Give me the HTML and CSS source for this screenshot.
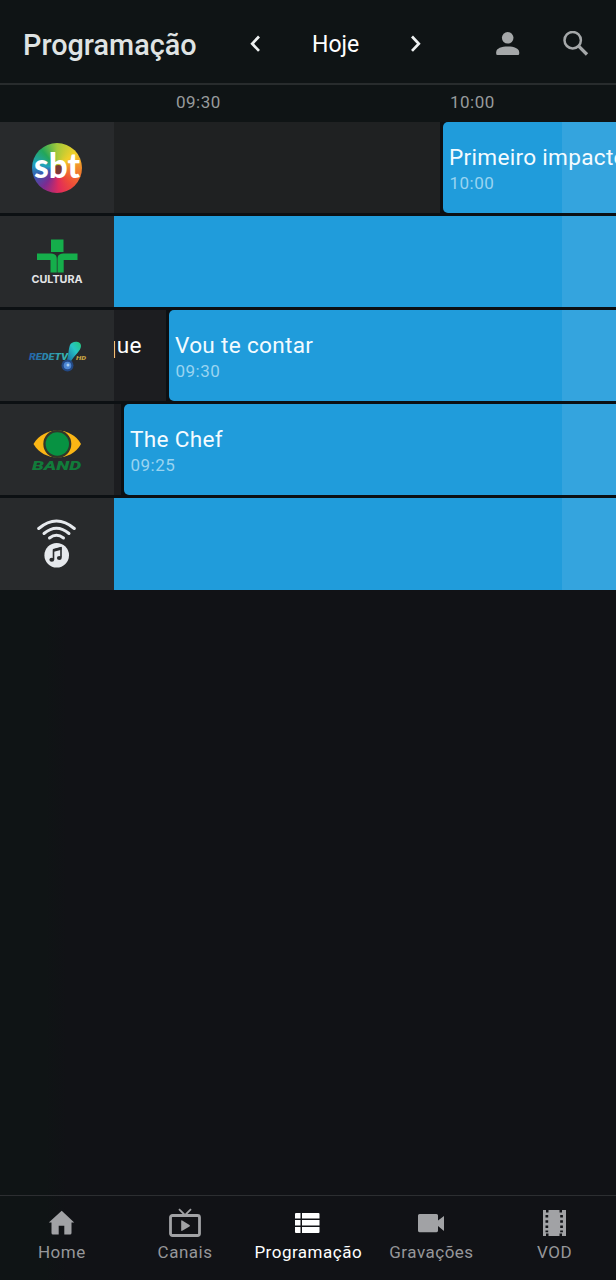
FILE: index.html
```html
<!DOCTYPE html>
<html lang="pt-BR">
<head>
<meta charset="utf-8">
<title>Programação</title>
<link rel="stylesheet" href="styles.css">
</head>
<body>
<div class="app">
  <header class="topbar">
    <h1 class="title">Programação</h1>
    <svg class="prev" width="12" height="18" viewBox="0 0 12 18"><path d="M10 1.500 3.200 8.700l6.800 7.200" fill="none" stroke="#eef1f1" stroke-width="2.700"/></svg>
    <span class="day">Hoje</span>
    <svg class="next" width="12" height="18" viewBox="0 0 12 18"><path d="M3 1.500 9.800 8.700 3 15.900" fill="none" stroke="#eef1f1" stroke-width="2.700"/></svg>
    <svg class="user" width="24" height="24" viewBox="0 0 24 24" fill="#a5a8a9"><circle cx="11.700" cy="5.800" r="5.800"/><path d="M.2 20.300C.2 16.300 5.700 14.600 11.700 14.600s11.500 1.700 11.500 5.700V21.800q0 1.200-1.200 1.200H1.400Q.2 23 .2 21.800Z"/></svg>
    <svg class="search" width="26" height="26" viewBox="0 0 26 26" fill="none" stroke="#a5a8a9"><circle cx="9.700" cy="9.200" r="8.200" stroke-width="2.500"/><path d="m15.700 15.200 8.300 8.300" stroke-width="3.300"/></svg>
  </header>
  <div class="times"><span class="t1">09:30</span><span class="t2">10:00</span></div>
  <main class="guide">
    <section class="row">
      <div class="channel">
        <svg width="54" height="54" viewBox="0 0 54 54">
          <foreignObject x="2" y="2" width="50" height="50"><div class="wheel"></div></foreignObject>
          <circle cx="28.500" cy="28.500" r="4.500" fill="#7b3a35"/>
          <text x="27" y="36.500" text-anchor="middle" class="sbt" textLength="46" lengthAdjust="spacingAndGlyphs">sbt</text>
        </svg>
      </div>
      <div class="track"><div class="prog past first"></div><div class="prog live start"><b>Primeiro impacto</b><small>10:00</small></div></div>
    </section>
    <section class="row">
      <div class="channel">
        <svg width="54" height="54" viewBox="0 0 54 54">
          <g fill="#15ae4b"><path d="M21 4.500h12.500V17H21z"/><path d="M7 18.500h14q5.800 0 5.800 5.500v13.500H20.500V25H7z"/><path d="M47.500 18.500H33.300q-5.800 0-5.800 5.500v13.500h6.200V25h13.800z"/></g>
          <text x="27" y="48.200" text-anchor="middle" class="cultura" textLength="51" lengthAdjust="spacingAndGlyphs">CULTURA</text>
        </svg>
      </div>
      <div class="track"><div class="prog live"></div></div>
    </section>
    <section class="row">
      <div class="channel">
        <svg width="60" height="54" viewBox="0 0 60 54">
          <defs>
            <linearGradient id="rede"><stop offset="0" stop-color="#2360a9"/><stop offset="1" stop-color="#36bdb1"/></linearGradient>
            <linearGradient id="bang" x1="1" y1="0" x2="0" y2="1"><stop offset="0" stop-color="#23c878"/><stop offset=".4" stop-color="#27c4c5"/><stop offset="1" stop-color="#165d9b"/></linearGradient>
          </defs>
          <text x="2" y="31.200" class="rede" fill="url(#rede)" textLength="39" lengthAdjust="spacingAndGlyphs">REDETV</text>
          <path d="M43 16c1-4 11-5 11 1 0 5-7 9-11 17l-4-1c3-6 2-12 4-17Z" fill="url(#bang)"/>
          <circle cx="40.500" cy="36.500" r="6" fill="#234883"/><circle cx="40.500" cy="36.500" r="3.800" fill="#4d87d4"/><circle cx="41" cy="36" r="1.500" fill="#a9cef0"/>
          <text x="49" y="31" class="hd" textLength="10" lengthAdjust="spacingAndGlyphs">HD</text>
        </svg>
      </div>
      <div class="track"><div class="prog past clipped"><b>que</b></div><div class="prog live start"><b>Vou te contar</b><small>09:30</small></div></div>
    </section>
    <section class="row">
      <div class="channel">
        <svg width="54" height="54" viewBox="0 0 54 54">
          <path d="M3.500 21C14 3 41 3 51 21 41 39 14 39 3.500 21Z" fill="#fbb615"/>
          <circle cx="27.300" cy="21" r="14" fill="#303729"/><circle cx="27.300" cy="21" r="11.700" fill="#079242"/>
          <text x="2" y="47" class="band" textLength="49" lengthAdjust="spacingAndGlyphs">BAND</text>
        </svg>
      </div>
      <div class="track"><div class="prog past sliver"></div><div class="prog live start"><b>The Chef</b><small>09:25</small></div></div>
    </section>
    <section class="row last">
      <div class="channel">
        <svg width="54" height="54" viewBox="0 0 54 54">
          <g fill="none" stroke="#e6e9ed" stroke-width="3" stroke-linecap="round"><path d="M8.700 11.500q17.800-15 35.600 0"/><path d="M14 16.500q12.500-10.500 25 0"/><path d="M19.500 21q7-5.500 14 0"/></g>
          <circle cx="26.700" cy="38.300" r="12.300" fill="#e6e9ed"/>
          <path d="M23.500 42.500V33l7.500-2v9.500" fill="none" stroke="#292b2d" stroke-width="1.600"/><path d="m23 32 8.500-2.200v3L23 35z" fill="#292b2d"/>
          <ellipse cx="21.800" cy="42.800" rx="2.400" ry="2" fill="#292b2d"/><ellipse cx="29.300" cy="41" rx="2.400" ry="2" fill="#292b2d"/>
        </svg>
      </div>
      <div class="track"><div class="prog live"></div></div>
    </section>
    <div class="later"></div>
  </main>
  <nav class="tabs">
    <a class="tab"><svg width="30" height="30" viewBox="0 0 30 30" fill="#a1a2a5"><path d="M14.700 2.700 1.800 14.500H4.500V25q0 1.500 1.500 1.500h5.700V17.700h5.600v8.800H23q1.500 0 1.500-1.500V14.500h2.700Z"/></svg><span>Home</span></a>
    <a class="tab"><svg width="34" height="30" viewBox="0 0 34 30"><path d="m11 1.200 6 6 6-6" fill="none" stroke="#a1a2a5" stroke-width="1.800"/><rect x="2.500" y="7.500" width="29" height="20" rx="2" fill="none" stroke="#a1a2a5" stroke-width="2.800"/><path d="M13.200 13q0-1 1-.5l7.300 4.500q1 .7 0 1.400l-7.300 4.400q-1 .5-1-.5Z" fill="#a1a2a5"/></svg><span>Canais</span></a>
    <a class="tab active"><svg width="30" height="30" viewBox="0 0 30 30" fill="#fff"><path d="M3 5h4.500v5.500H2V6q0-1 1-1ZM9 5H25.500q1 0 1 1V10.500H9ZM2 12h5.500v5.500H2ZM9 12H26.500v5.500H9ZM2 19h5.500v6H3q-1 0-1-1ZM9 19H26.500v5q0 1-1 1H9Z"/></svg><span>Programação</span></a>
    <a class="tab"><svg width="30" height="30" viewBox="0 0 30 30" fill="#a1a2a5"><path d="M3.500 6h17q1.500 0 1.500 1.500v5L28 8v15l-6-5v4.800q0 1.400-1.500 1.400h-17Q2 24.200 2 22.800V7.500Q2 6 3.500 6Z"/></svg><span>Gravações</span></a>
    <a class="tab"><svg width="30" height="30" viewBox="0 0 30 30"><path d="M4 2h3v2.500h2.500V2h11v2.500H23V2h4v26h-4v-2.500h-2.500V28h-11v-2.500H7V28H4Z" fill="#a1a2a5"/><path d="M6.500 7h2.700v2.600H6.500zM6.500 12.200h2.700v2.600H6.500zM6.500 17.400h2.700V20H6.500zM6.500 22.500h2.700v1.800H6.500zM21.200 7h2.700v2.600h-2.700zM21.200 12.200h2.700v2.600h-2.700zM21.200 17.400h2.700V20h-2.700zM21.200 22.500h2.700v1.800h-2.700z" fill="#111216"/></svg><span>VOD</span></a>
  </nav>
</div>
</body>
</html>
```
FILE: styles.css
```css
* { box-sizing: border-box; }
body { margin: 0; background: #111216; font-family: Roboto, "Liberation Sans", sans-serif; }
svg { display: block; flex: none; }
.app { width: 616px; height: 1280px; display: flex; flex-direction: column; overflow: hidden; background: linear-gradient(90deg, #0f1415 0, #0f1415 46px, #111216 66px); }
.topbar { height: 85px; flex: none; display: flex; align-items: center; padding: 4px 0 0 23px; border-bottom: 2px solid #282c2d; background: #0f1415; color: #fff; }
.title { margin: 0; padding-top: 3px; width: 226px; font-size: 28.8px; font-weight: 500; line-height: 34px; color: #dfe3e3; white-space: nowrap; }
.day { width: 97px; margin-left: 51px; padding-top: 3px; font-size: 23px; line-height: 30px; white-space: nowrap; }
.user { margin-left: 75px; }
.search { margin-left: 43px; }
.times { height: 37px; flex: none; display: flex; padding: 7px 0 0 176px; background: #0f1415; color: #979b9c; font-size: 17px; line-height: 20px; letter-spacing: .5px; }
.t1 { width: 274px; }
.guide { position: relative; display: flex; flex-direction: column; gap: 3px; background: #0c1013; }
.row { height: 91px; display: flex; }
.last { height: 92px; }
.channel { width: 114px; flex: none; display: flex; align-items: center; justify-content: center; background: #282a2c; }
.track { flex: 1; min-width: 0; display: flex; overflow: hidden; }
.prog { overflow: hidden; white-space: nowrap; }
.past { flex: none; background: #1c1d20; color: #fff; margin-right: 3px; }
.first { width: 326px; background: #1f2122; }
.clipped { width: 52px; padding-top: 22px; display: flex; }
.clipped b { margin-left: -10.5px; }
.sliver { width: 7px; }
.live { flex: 1; min-width: 0; background: #209cdb; color: #f4fbff; }
.start { padding: 22px 0 0 6px; border-radius: 5px 0 0 5px; }
.prog b { display: block; font-weight: 400; font-size: 22.6px; line-height: 28px; letter-spacing: .3px; }
.prog small { display: block; font-size: 17px; line-height: 20px; margin: 1px 0 0 .5px; letter-spacing: .5px; color: #99d4f1; }
.later { position: absolute; top: 0; right: 0; width: 54px; height: 100%; background: rgba(255, 255, 255, .09); clip-path: polygon(0 0, 100% 0, 100% 91px, 0 91px, 0 94px, 100% 94px, 100% 185px, 0 185px, 0 188px, 100% 188px, 100% 279px, 0 279px, 0 282px, 100% 282px, 100% 373px, 0 373px, 0 376px, 100% 376px, 100% 100%, 0 100%); }
.wheel { width: 50px; height: 50px; border-radius: 50%; background: conic-gradient(#a3c93b, #f2cf29 50deg, #f18a2b 90deg, #ee4a3a 140deg, #e02a5c 175deg, #7b2b91 215deg, #3a58b0 250deg, #21a3bd 280deg, #23a659 320deg, #a3c93b); }
.sbt { font: 900 34px Lato, sans-serif; fill: #fff; }
.cultura { font: 700 10.8px Inter, sans-serif; fill: #e4e5e7; }
.rede { font: italic 900 9.5px Roboto, sans-serif; }
.hd { font: italic 900 6px Roboto, sans-serif; fill: #c7a444; }
.band { font: italic 900 13.5px Roboto, sans-serif; fill: #117b3a; }
.tabs { height: 85px; flex: none; margin-top: auto; border-top: 1px solid #2c2e31; display: grid; grid-template-columns: repeat(5, 1fr); }
.tab { display: flex; flex-direction: column; align-items: center; padding-top: 12px; color: #96979a; font-size: 17px; line-height: 20px; letter-spacing: .5px; }
.tab span { margin: 4px 0 0 .5px; white-space: nowrap; }
.active { color: #fff; }
```
